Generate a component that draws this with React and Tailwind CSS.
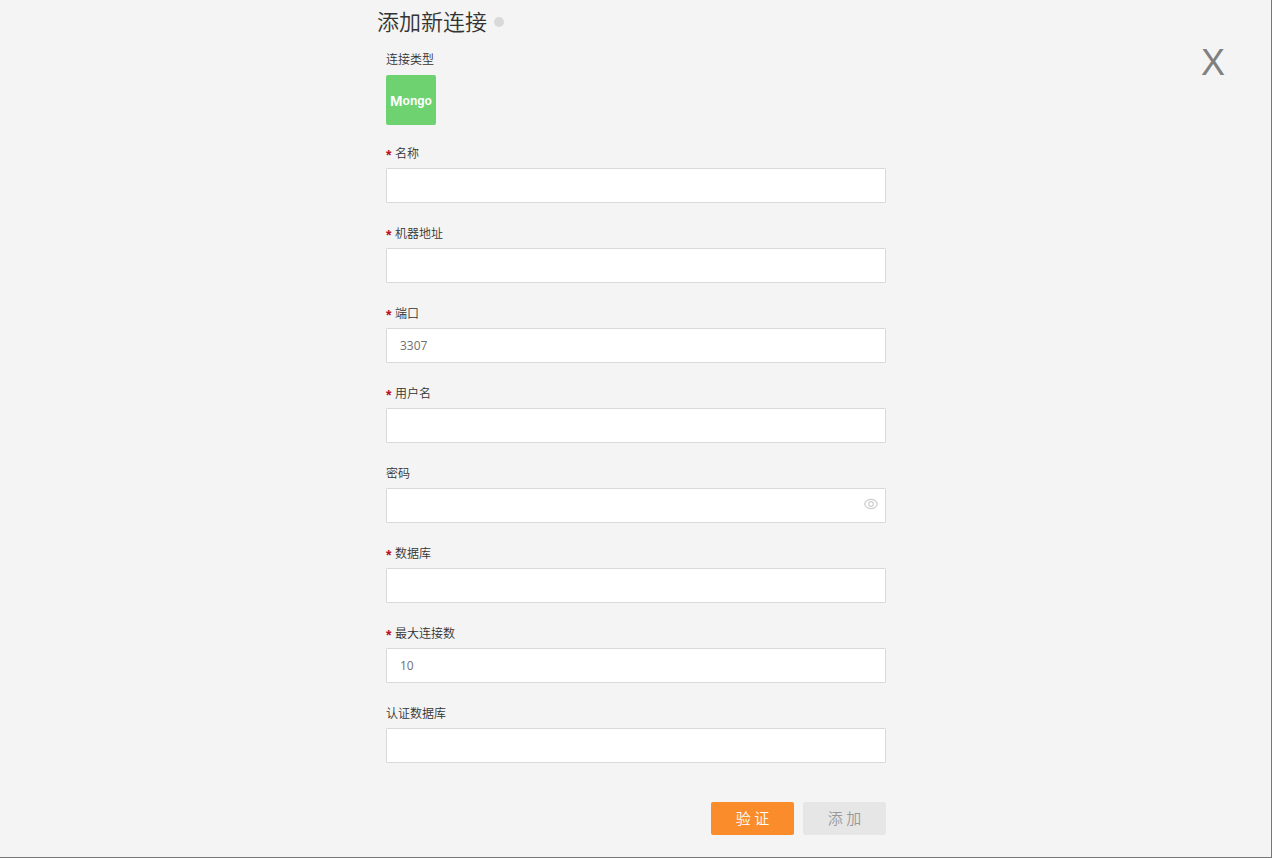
import { useState } from 'react';

const FIELDS = [
  { name: 'name', label: '名称', required: true },
  { name: 'host', label: '机器地址', required: true },
  { name: 'port', label: '端口', required: true, value: '3307' },
  { name: 'user', label: '用户名', required: true },
  { name: 'password', label: '密码', password: true },
  { name: 'database', label: '数据库', required: true },
  { name: 'maxConnections', label: '最大连接数', required: true, value: '10' },
  { name: 'authDatabase', label: '认证数据库' },
];

function EyeIcon() {
  return (
    <svg className="w-4 h-4" viewBox="0 0 16 16" fill="none" stroke="currentColor" strokeWidth="1.2" aria-hidden="true">
      <path d="M1.5 8C2.8 4.8 5.2 3.3 8 3.3S13.2 4.8 14.5 8C13.2 11.2 10.8 12.7 8 12.7S2.8 11.2 1.5 8Z" />
      <circle cx="8" cy="8" r="2.4" />
    </svg>
  );
}

function Field({ name, label, required, password, value = '' }) {
  const [text, setText] = useState(value);
  const [visible, setVisible] = useState(false);

  return (
    <div className="mb-5">
      <label htmlFor={name} className="flex items-center h-5 mb-[5px] text-xs leading-5">
        {required && (
          <span className="w-[9px] pt-1 font-['Liberation_Sans',sans-serif] font-bold text-sm leading-4 text-[#b80f24]">*</span>
        )}
        {label}
      </label>
      <div className="relative">
        <input
          id={name}
          name={name}
          type={password && !visible ? 'password' : 'text'}
          value={text}
          onChange={(e) => setText(e.target.value)}
          className="block w-full h-[35px] px-[13px] bg-white border border-[#d9d9d9] rounded-[1px] font-['Open_Sans','Noto_Sans_CJK_SC',sans-serif] font-normal text-xs text-[#707070] outline-none focus:border-[#fa8c2b]"
        />
        {password && (
          <button
            type="button"
            aria-label="显示密码"
            onClick={() => setVisible(!visible)}
            className="absolute inset-y-0 right-[7px] pb-1 text-[#cfcfcf]"
          >
            <EyeIcon />
          </button>
        )}
      </div>
    </div>
  );
}

export default function App() {
  return (
    <div className="relative min-h-screen bg-[#f4f4f4] shadow-[inset_-1px_-1px_0_#777] font-['Noto_Sans_CJK_SC',sans-serif] font-[350] text-[#333]">
      <button
        type="button"
        aria-label="关闭"
        className="absolute top-[41px] right-[47px] h-11 font-['Liberation_Sans',sans-serif] text-[36px] leading-[44px] text-[#808080]"
      >
        X
      </button>

      <form className="max-w-[500px] mx-auto pb-[23px]" onSubmit={(e) => e.preventDefault()}>
        {/* Title */}
        <div className="flex items-center h-11 -ml-[9px] mb-[5px]">
          <h1 className="pb-1 text-[22px] leading-10 font-[350]">添加新连接</h1>
          <span className="w-2.5 h-2.5 ml-[7px] rounded-full bg-[#d9d9d9]" />
        </div>

        {/* Connection type */}
        <div className="mb-[18px]">
          <p className="mb-1.5 text-xs leading-5">连接类型</p>
          <button
            type="button"
            className="flex items-center justify-center w-[50px] h-[50px] pt-0.5 rounded-[2px] bg-[#6ed270] font-['Liberation_Sans',sans-serif] font-bold text-white text-xs"
          >
            <span className="text-[15px]">M</span>ongo
          </button>
        </div>

        {FIELDS.map((field) => (
          <Field key={field.name} {...field} />
        ))}

        <div className="flex justify-end gap-[9px] mt-[39px]">
          <button type="submit" className="w-[83px] h-[33px] rounded-[2px] bg-[#fa8c2b] text-[15px] text-white">
            验 证
          </button>
          <button type="button" disabled className="w-[83px] h-[33px] rounded-[2px] bg-[#e6e6e6] text-[15px] text-[#999]">
            添 加
          </button>
        </div>
      </form>
    </div>
  );
}
